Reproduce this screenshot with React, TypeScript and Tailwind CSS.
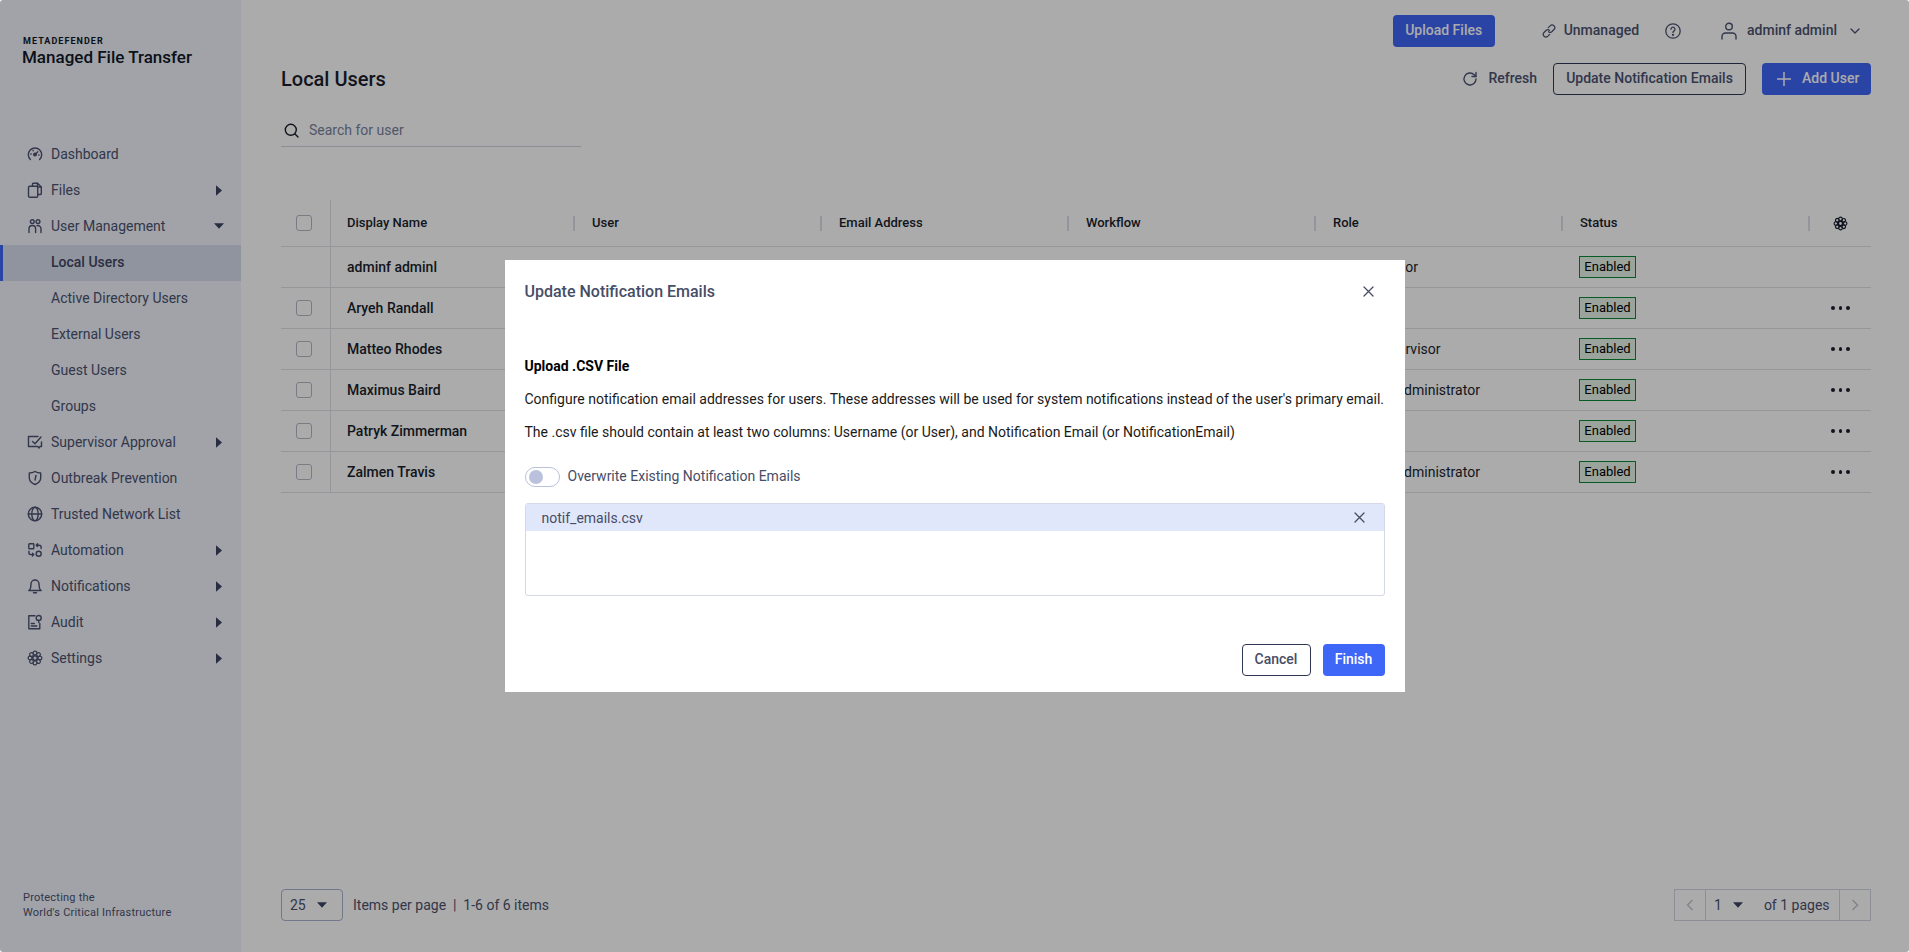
import type { ReactNode } from 'react'

const font = { fontFamily: 'Roboto, sans-serif' }

function Ico({ size = 16, children, className = '' }: { size?: number; children: ReactNode; className?: string }) {
  return (
    <svg width={size} height={size} viewBox="0 0 16 16" fill="none" stroke="currentColor" strokeWidth="1.4" strokeLinecap="round" strokeLinejoin="round" className={`shrink-0 ${className}`}>
      {children}
    </svg>
  )
}

// flower shaped gear used in the sidebar and the table header
const GearPetals = () => (
  <>
    <circle cx="8" cy="8" r="2.2" />
    {[0, 45, 90, 135, 180, 225, 270, 315].map((a) => (
      <circle key={a} cx="8" cy="3.1" r="1.9" strokeWidth="1.2" transform={`rotate(${a} 8 8)`} />
    ))}
  </>
)

const icons: Record<string, ReactNode> = {
  dashboard: (
    <Ico>
      <path d="M3.400 13.500A6.700 6.700 0 1 1 12.600 13.500" />
      <circle cx="8" cy="8.600" r="1.300" fill="currentColor" />
      <path d="M8.800 7.800 10.800 5.800M3.800 8h.4M11.800 9h.3M6 4.400l.2.4" />
    </Ico>
  ),
  files: (
    <Ico>
      <path d="M5.500 4V1.900c0-.4.3-.7.7-.7h4.300l3.800 3.800v6.800c0 .4-.3.7-.7.700h-2.400" />
      <path d="M10.500 1.200v3.800h3.800" />
      <rect x="1.500" y="4.200" width="9.200" height="11" rx="1.200" />
    </Ico>
  ),
  users: (
    <Ico>
      <circle cx="5.300" cy="3.600" r="1.900" />
      <circle cx="11" cy="3.600" r="1.900" />
      <path d="M2 14.500v-3.700a3.300 3.300 0 0 1 6.600 0v3.700" />
      <path d="M10 7.600a3.200 3.200 0 0 1 4 3.200v3.700" />
    </Ico>
  ),
  supervisor: (
    <Ico>
      <path d="M14.500 8v4.500h-1.600l-1 1.600-1-1.600H1.500V2.500H11" />
      <path d="m5.500 7.500 2.500 2.300L14 3" />
    </Ico>
  ),
  shield: (
    <Ico>
      <path d="M8 1.500c1.700 1 3.700 1.500 5.700 1.500v4.700c0 3-2.300 5.500-5.700 6.800-3.400-1.300-5.700-3.800-5.700-6.800V3C4.300 3 6.300 2.500 8 1.500z" />
      <path d="M9 5.500 8 10" />
    </Ico>
  ),
  globe: (
    <Ico>
      <circle cx="8" cy="8" r="6.700" />
      <path d="M1.300 8h13.400" />
      <ellipse cx="8" cy="8" rx="3.200" ry="6.700" />
    </Ico>
  ),
  automation: (
    <Ico>
      <rect x="1.800" y="1.800" width="5" height="5" rx=".6" />
      <circle cx="11.700" cy="11.700" r="2.500" />
      <path d="M10.600 1.800 9.200 3.200l1.400 1.400M9.200 3.200h3c1 0 1.900.8 1.900 1.800v1.500" />
      <path d="M5.400 14 6.800 12.600 5.400 11.200M6.800 12.600h-3c-1 0-1.900-.8-1.900-1.800V9.300" />
    </Ico>
  ),
  bell: (
    <Ico>
      <path d="M1.800 12.500c1-.6 1.700-1.500 1.800-2.700L4 6a4 4 0 0 1 8 0l.4 3.800c.1 1.200.8 2.100 1.800 2.700z" />
      <path d="M6.500 14.800h3" />
    </Ico>
  ),
  audit: (
    <Ico>
      <path d="M8 1.800H1.800v13h11V9.500" />
      <path d="M4.300 9.500h3M4.300 12h5.500" />
      <circle cx="11.700" cy="4" r="2.500" />
      <path d="M11.700 6.500v2" />
    </Ico>
  ),
  settings: <Ico><GearPetals /></Ico>,
}

function CaretRight() {
  return (
    <svg width="6" height="11" viewBox="0 0 6 11" className="ml-auto shrink-0 fill-[#3d4462]">
      <path d="M0 .300 6 5.500 0 10.700z" />
    </svg>
  )
}

function CaretDown() {
  return (
    <svg width="10" height="6" viewBox="0 0 10 6" className="shrink-0 fill-[#3d4462]">
      <path d="M0 .300h10L5 5.700z" />
    </svg>
  )
}

type NavItem = { label: string; icon?: string; caret?: 'right' | 'down'; active?: boolean }

const nav: NavItem[] = [
  { label: 'Dashboard', icon: 'dashboard' },
  { label: 'Files', icon: 'files', caret: 'right' },
  { label: 'User Management', icon: 'users', caret: 'down' },
  { label: 'Local Users', active: true },
  { label: 'Active Directory Users' },
  { label: 'External Users' },
  { label: 'Guest Users' },
  { label: 'Groups' },
  { label: 'Supervisor Approval', icon: 'supervisor', caret: 'right' },
  { label: 'Outbreak Prevention', icon: 'shield' },
  { label: 'Trusted Network List', icon: 'globe' },
  { label: 'Automation', icon: 'automation', caret: 'right' },
  { label: 'Notifications', icon: 'bell', caret: 'right' },
  { label: 'Audit', icon: 'audit', caret: 'right' },
  { label: 'Settings', icon: 'settings', caret: 'right' },
]

function Sidebar() {
  return (
    <aside className="flex h-full w-[241px] shrink-0 flex-col bg-[#f0f3fb] text-[#4b5270]">
      <div className="pl-[22px] pt-[36px] text-[#111827]">
        <div className="pl-px text-[9px] font-bold leading-[11px] tracking-[1.05px]">METADEFENDER</div>
        <div className="text-[17px] font-medium leading-[20px]">Managed File Transfer</div>
      </div>
      <nav className="mt-[69px]">
        {nav.map((n) => (
          <div
            key={n.label}
            className={`flex h-9 items-center text-sm ${n.icon ? 'gap-2 pl-[27px]' : n.active ? 'mt-px -mb-px border-l-[3px] border-[#3e66f7] bg-[#d7ddec] pb-[2px] pl-[48px] font-medium text-[#3f4663]' : 'pl-[51px]'} pr-[19px]`}
          >
            {n.icon && icons[n.icon]}
            <span>{n.label}</span>
            {n.caret === 'right' && <CaretRight />}
            {n.caret === 'down' && <span className="ml-auto -mr-0.5"><CaretDown /></span>}
          </div>
        ))}
      </nav>
      <div className="mt-auto pb-[32px] pl-[23px] text-[11px] leading-[15px] tracking-[.22px]">
        <div>Protecting the</div>
        <div>World's Critical Infrastructure</div>
      </div>
    </aside>
  )
}

function TopBar() {
  return (
    <div className="flex h-8 items-center justify-end text-sm">
      <button className="h-8 w-[102px] rounded bg-[#3e66f7] pb-[2px] font-medium text-white">Upload Files</button>
      <div className="ml-[47px] flex items-center gap-[8px] text-[#4b5270]">
        <Ico size={14}>
          <path d="M7.200 4.200 9.300 2.100a3 3 0 0 1 4.400 4.200l-2.200 2.300a3 3 0 0 1-4 .2" />
          <path d="M8.800 11.800 6.700 13.900a3 3 0 0 1-4.400-4.200l2.200-2.300a3 3 0 0 1 4-.2" />
        </Ico>
        <span className="pb-[2px] font-medium">Unmanaged</span>
      </div>
      <span className="ml-[26px] text-[#4b5270]">
        <svg width="16" height="16" viewBox="0 0 16 16" fill="none" stroke="currentColor" strokeWidth="1.300" strokeLinecap="round">
          <circle cx="8" cy="8" r="7.200" />
          <path d="M6 6.200a2 2 0 1 1 3.100 1.700c-.7.500-1.100.9-1.100 1.700" />
          <circle cx="8" cy="11.800" r=".5" fill="currentColor" />
        </svg>
      </span>
      <span className="ml-[40px] text-[#4b5270]">
        <svg width="16" height="18" viewBox="0 0 16 18" fill="none" stroke="currentColor" strokeWidth="1.400" strokeLinecap="round">
          <circle cx="8" cy="4.500" r="3.300" />
          <path d="M1 17v-2.500a3.500 3.500 0 0 1 3.500-3.500h7a3.500 3.500 0 0 1 3.500 3.500V17" />
        </svg>
      </span>
      <span className="ml-[10px] pb-[2px] font-medium text-[#4b5270]">adminf adminl</span>
      <svg width="10" height="6" viewBox="0 0 10 6" fill="none" stroke="#4b5270" strokeWidth="1.300" strokeLinecap="round" strokeLinejoin="round" className="ml-[13px] mr-[11px]">
        <path d="m1 1 4 4 4-4" />
      </svg>
    </div>
  )
}

const gridCols = 'grid grid-cols-[49px_243px_247px_247px_247px_247px_247px_63px]'

function Checkbox() {
  return <span className="block h-4 w-4 rounded-[3px] border border-[#b6b9c7] bg-transparent" />
}

function HeadCell({ label }: { label: string }) {
  return (
    <div className="flex items-center">
      <span className="mr-[17px] h-[15px] w-[2px] bg-[#dddfe6]" />
      <span>{label}</span>
    </div>
  )
}

const rows = [
  { name: 'adminf adminl', role: 'Administrator', self: true },
  { name: 'Aryeh Randall', role: '' },
  { name: 'Matteo Rhodes', role: 'Group Supervisor' },
  { name: 'Maximus Baird', role: 'Workflow Administrator' },
  { name: 'Patryk Zimmerman', role: '' },
  { name: 'Zalmen Travis', role: 'Workflow Administrator' },
]

function UsersTable() {
  return (
    <div className="mt-[53px] text-[#1a1f2e]">
      <div className={`${gridCols} h-[47px] border-b border-[#dfe1e8] text-[13px] font-medium`}>
        <div className="flex items-center justify-center pr-[3px]"><Checkbox /></div>
        <div className="flex items-center border-l border-[#dfe1e8] pl-4">Display Name</div>
        {['User', 'Email Address', 'Workflow', 'Role', 'Status'].map((h) => (
          <HeadCell key={h} label={h} />
        ))}
        <div className="flex items-center">
          <span className="h-[15px] w-[2px] bg-[#dddfe6]" />
          <span className="ml-[23px]"><Ico size={15}><GearPetals /></Ico></span>
        </div>
      </div>
      {rows.map((r) => (
        <div key={r.name} className={`${gridCols} h-[41px] border-b border-[#dfe1e8] text-sm`}>
          <div className="flex items-center justify-center pr-[3px]">{!r.self && <Checkbox />}</div>
          <div className="flex items-center border-l border-[#dfe1e8] pl-4 font-medium">{r.name}</div>
          <div />
          <div />
          <div />
          <div className="flex items-center pl-[19px]">{r.role}</div>
          <div className="flex items-center pl-[18px]">
            <span className="flex h-[22px] w-[57px] items-center justify-center border border-[#0b8a35] bg-[#e6f5ea] text-[13px] text-black">Enabled</span>
          </div>
          <div className="flex items-center gap-1 pl-[23px]">
            {!r.self && (
              <>
                <span className="h-[3.500px] w-[3.500px] rounded-full bg-[#1a1f2e]" />
                <span className="h-[3.500px] w-[3.500px] rounded-full bg-[#1a1f2e]" />
                <span className="h-[3.500px] w-[3.500px] rounded-full bg-[#1a1f2e]" />
              </>
            )}
          </div>
        </div>
      ))}
    </div>
  )
}

function Pagination() {
  return (
    <div className="mt-auto flex h-8 items-center justify-between text-sm text-[#4b5270]">
      <div className="flex items-center">
        <div className="flex h-8 w-[62px] items-center gap-[11px] rounded border border-[#a9b3ce] pl-[8px]">
          <span>25</span>
          <CaretDown />
        </div>
        <span className="ml-[10px]">Items per page&nbsp;&nbsp;|&nbsp;&nbsp;1-6 of 6 items</span>
      </div>
      <div className="flex h-8 w-[197px] items-center border border-[#d2d5e0]">
        <div className="flex h-full w-[31px] items-center justify-center border-r border-[#d2d5e0] text-[#bcc1d1]">
          <svg width="8" height="12" viewBox="0 0 8 12" fill="none" stroke="currentColor" strokeWidth="1.300"><path d="M6.500 1 1.500 6l5 5" /></svg>
        </div>
        <span className="ml-[8px]">1</span>
        <span className="ml-[11px]"><CaretDown /></span>
        <span className="ml-[21px]">of 1 pages</span>
        <div className="ml-auto flex h-full w-[31px] items-center justify-center border-l border-[#d2d5e0] text-[#bcc1d1]">
          <svg width="8" height="12" viewBox="0 0 8 12" fill="none" stroke="currentColor" strokeWidth="1.300"><path d="m1.500 1 5 5-5 5" /></svg>
        </div>
      </div>
    </div>
  )
}

function CloseX() {
  return (
    <svg width="11" height="11" viewBox="0 0 11 11" fill="none" stroke="#474d66" strokeWidth="1.300" strokeLinecap="round" className="shrink-0">
      <path d="m1 1 9 9M10 1l-9 9" />
    </svg>
  )
}

function UploadModal() {
  return (
    <div className="absolute inset-0 flex items-center justify-center bg-black/[0.33]">
      <div className="flex h-[432px] w-[900px] flex-col bg-white px-5 text-sm leading-5">
        <div className="flex h-[63px] shrink-0 items-center justify-between pr-[11px]">
          <span className="text-base font-medium text-[#474d66]">Update Notification Emails</span>
          <CloseX />
        </div>
        <div className="mt-[33px] font-bold text-black">Upload .CSV File</div>
        <p className="mt-[13px] text-[#1a1a1a]">Configure notification email addresses for users. These addresses will be used for system notifications instead of the user's primary email.</p>
        <p className="mt-[13px] text-[#1a1a1a]">The .csv file should contain at least two columns: Username (or User), and Notification Email (or NotificationEmail)</p>
        <div className="mt-[25px] flex h-5 items-center gap-2">
          <span className="flex h-5 w-[35px] items-center rounded-full border border-[#b9c1dc] pl-[3px]">
            <span className="h-[14px] w-[14px] rounded-full bg-[#b9c1dc]" />
          </span>
          <span className="pb-[2px] text-[#474d66]">Overwrite Existing Notification Emails</span>
        </div>
        <div className="mt-4 h-[93px] rounded-[3px] border border-[#d5d9e6]">
          <div className="flex h-[27px] items-center justify-between bg-[#e1e7fa] pl-[16px] pr-[19px] text-[#474d66]">
            <span>notif_emails.csv</span>
            <CloseX />
          </div>
        </div>
        <div className="mt-auto mb-4 flex justify-end gap-3 font-medium">
          <button className="h-8 w-[69px] rounded border border-[#2f3755] pb-[2px] text-[#474d66]">Cancel</button>
          <button className="h-8 w-[62px] rounded bg-[#3e66f7] pb-[2px] text-white">Finish</button>
        </div>
      </div>
    </div>
  )
}

export default function App() {
  return (
    <div style={font} className="relative flex h-screen w-screen overflow-hidden rounded-[3px] bg-white">
      <Sidebar />
      <main className="flex min-w-0 flex-1 flex-col pb-[31px] pl-[40px] pr-[38px] pt-[15px]">
        <TopBar />
        <div className="mt-4 flex h-8 items-center justify-between">
          <h1 className="text-xl font-medium text-[#1a1f2e]">Local Users</h1>
          <div className="flex items-center text-sm font-medium text-[#4b5270]">
            <svg width="16" height="16" viewBox="0 0 16 16" fill="none" stroke="currentColor" strokeWidth="1.400" strokeLinecap="round" strokeLinejoin="round">
              <path d="M14 8a6 6 0 1 1-1.800-4.300L14 5.500" />
              <path d="M14 1.500v4h-4" />
            </svg>
            <span className="ml-[10px] pb-[2px]">Refresh</span>
            <button className="ml-[16px] h-8 w-[193px] rounded border border-[#2f3755] pb-[2px]">Update Notification Emails</button>
            <button className="ml-4 flex h-8 w-[109px] items-center rounded bg-[#3e66f7] pl-[14px] text-white">
              <svg width="16" height="16" viewBox="0 0 16 16" fill="none" stroke="currentColor" strokeWidth="1.500"><path d="M8 1v14M1 8h14" /></svg>
              <span className="ml-[10px] pb-[2px]">Add User</span>
            </button>
          </div>
        </div>
        <div className="mt-[19px] flex h-[33px] w-[300px] items-center gap-[10px] border-b border-[#cfd2dd] pl-[3px]">
          <svg width="15" height="15" viewBox="0 0 15 15" fill="none" stroke="#1a1f2e" strokeWidth="1.400" strokeLinecap="round">
            <circle cx="6.800" cy="6.800" r="5.500" />
            <path d="m11 11 3 3" />
          </svg>
          <span className="text-sm text-[#7a829e]">Search for user</span>
        </div>
        <UsersTable />
        <Pagination />
      </main>
      <UploadModal />
    </div>
  )
}
